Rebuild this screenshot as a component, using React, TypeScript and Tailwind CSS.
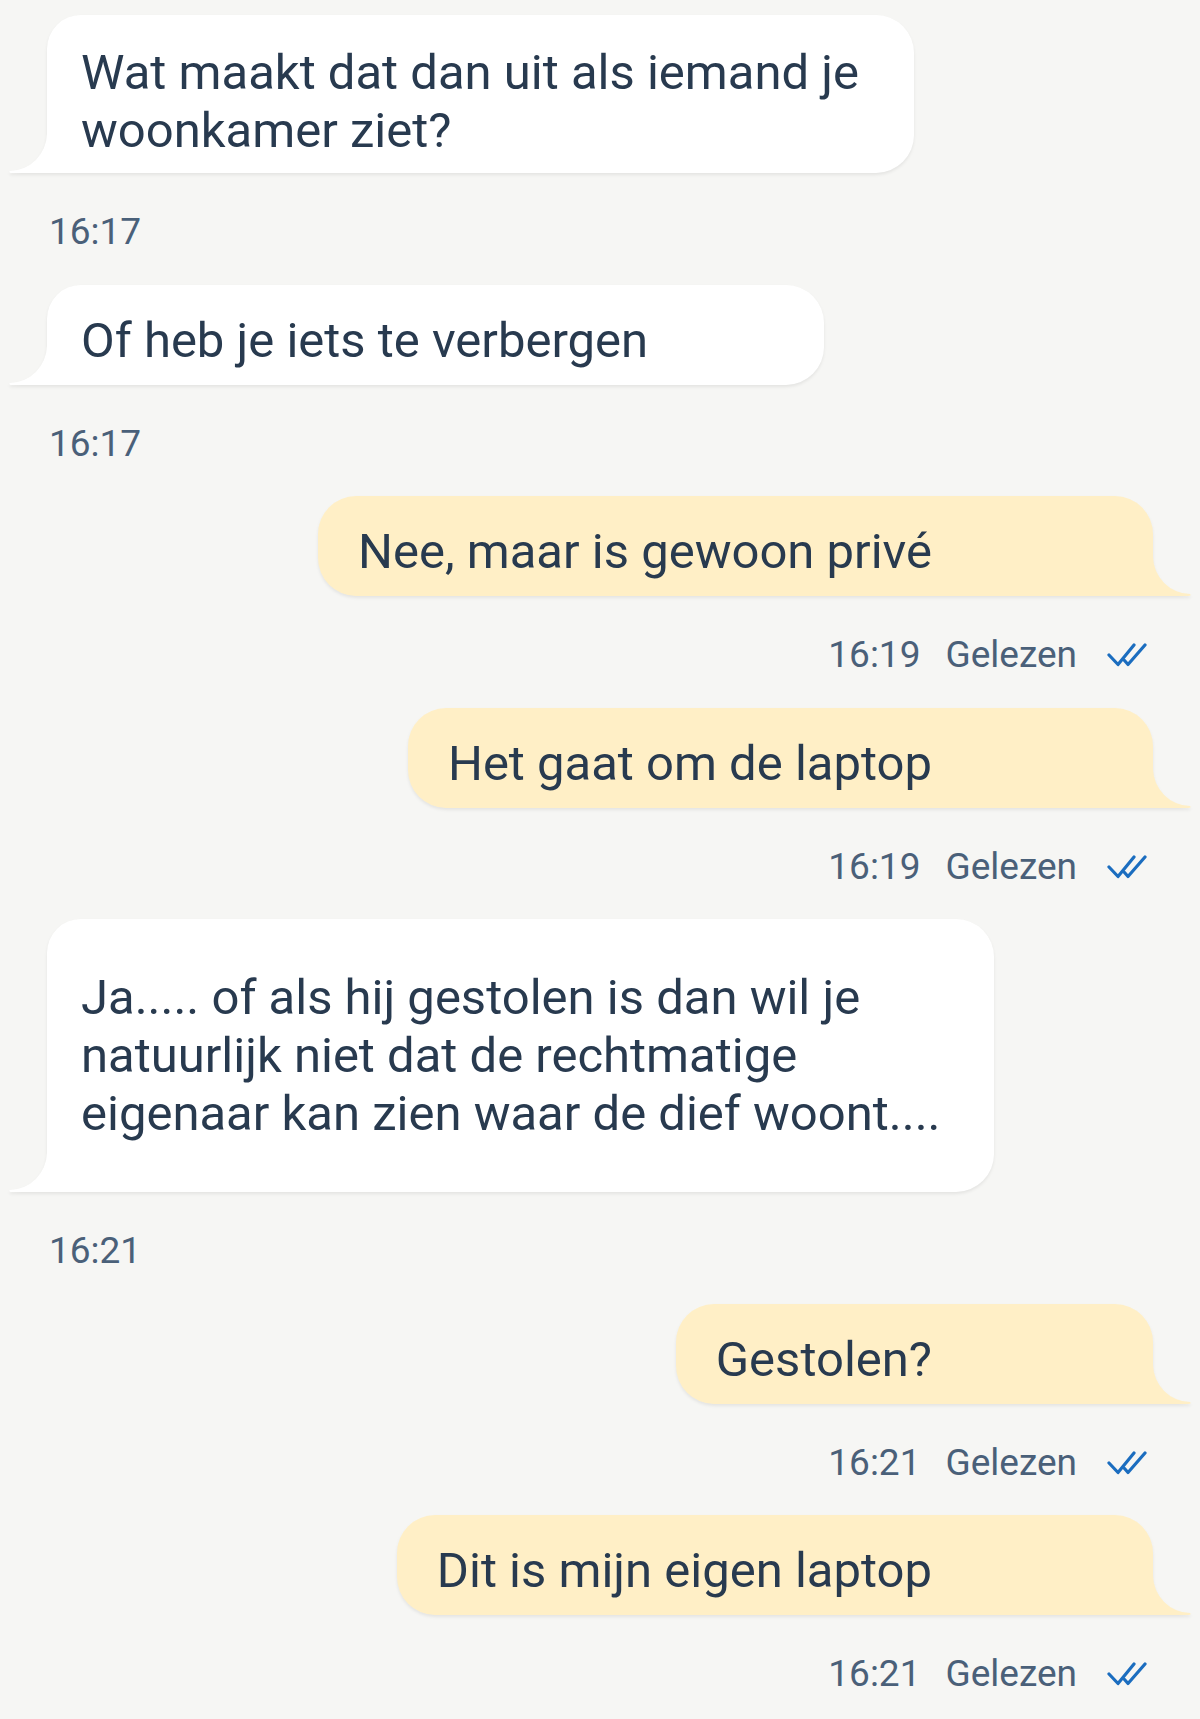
import * as React from "react";

type Msg = {
  id: number;
  mine: boolean;
  text: string;
  time: string;
  width?: string;
  pad?: string;
};

const messages: Msg[] = [
  {
    id: 1,
    mine: false,
    text: "Wat maakt dat dan uit als iemand je woonkamer ziet?",
    time: "16:17",
    width: "w-[867px]",
    pad: "pt-[29px] pb-[13px]",
  },
  { id: 2, mine: false, text: "Of heb je iets te verbergen", time: "16:17", width: "w-[777px]" },
  { id: 3, mine: true, text: "Nee, maar is gewoon privé", time: "16:19" },
  { id: 4, mine: true, text: "Het gaat om de laptop", time: "16:19" },
  {
    id: 5,
    mine: false,
    text: "Ja..... of als hij gestolen is dan wil je natuurlijk niet dat de rechtmatige eigenaar kan zien waar de dief woont....",
    time: "16:21",
    width: "w-[947px]",
    pad: "pt-[50px] pb-[49px]",
  },
  { id: 6, mine: true, text: "Gestolen?", time: "16:21" },
  { id: 7, mine: true, text: "Dit is mijn eigen laptop", time: "16:21" },
];

function Tail({ mine }: { mine: boolean }) {
  return (
    <svg
      viewBox="0 0 40 45"
      className={
        mine
          ? "absolute bottom-0 right-[-38px] h-[45px] w-[40px] -scale-x-100"
          : "absolute bottom-0 left-[-38px] h-[45px] w-[40px]"
      }
    >
      <path
        d="M40 0 L38 0 L38 6 A38 38 0 0 1 1 43 Q-1 45 3 45 L40 45 Z"
        fill={mine ? "#ffefc6" : "#ffffff"}
      />
    </svg>
  );
}

function ReadTicks() {
  return (
    <svg viewBox="0 0 40 24" className="h-[24px] w-[40px]" fill="none">
      <path
        d="M2 12 L11 21.5 L27 2"
        stroke="#1b6dbf"
        strokeWidth="3.2"
        strokeLinecap="round"
        strokeLinejoin="round"
      />
      <path
        d="M17.5 17.5 L21 21.5 L38 2"
        stroke="#1b6dbf"
        strokeWidth="3.2"
        strokeLinecap="round"
        strokeLinejoin="round"
      />
    </svg>
  );
}

function Bubble({ msg }: { msg: Msg }) {
  if (msg.mine) {
    return (
      <div className="flex flex-col items-end pr-[47px]">
        <div className="relative drop-shadow-[0_2px_1.5px_rgba(0,0,0,0.07)]">
          <div className="rounded-[38px] rounded-br-none bg-[#ffefc6] pb-[15px] pl-[40px] pr-[221px] pt-[27px] text-[49px] leading-[58px] text-[#283a4f]">
            {msg.text}
          </div>
          <Tail mine />
        </div>
        <div className="mr-[6px] mt-[39px] flex h-[40px] items-center text-[37px] leading-[40px] text-[#4a6079]">
          <span>{msg.time}</span>
          <span className="ml-[25px]">Gelezen</span>
          <span className="ml-[30px]">
            <ReadTicks />
          </span>
        </div>
      </div>
    );
  }
  return (
    <div className="flex flex-col items-start pl-[47px]">
      <div className="relative drop-shadow-[0_2px_1.5px_rgba(0,0,0,0.07)]">
        <div
          className={`${msg.width} rounded-[38px] rounded-tl-[34px] rounded-bl-none bg-white pl-[34px] pr-[20px] text-[49px] leading-[58px] text-[#283a4f] ${
            msg.pad ?? "pb-[15px] pt-[27px]"
          }`}
        >
          {msg.text}
        </div>
        <Tail mine={false} />
      </div>
      <div className="ml-[2px] mt-[39px] h-[40px] text-[37px] leading-[40px] text-[#4a6079]">
        {msg.time}
      </div>
    </div>
  );
}

export default function App() {
  return (
    <div
      className="h-[1719px] overflow-hidden bg-[#f6f6f4] pt-[15px]"
      style={{ fontFamily: "Roboto, 'Noto Sans', sans-serif" }}
    >
      <div className="flex flex-col gap-[32.5px]">
        {messages.map((m) => (
          <Bubble key={m.id} msg={m} />
        ))}
      </div>
    </div>
  );
}
